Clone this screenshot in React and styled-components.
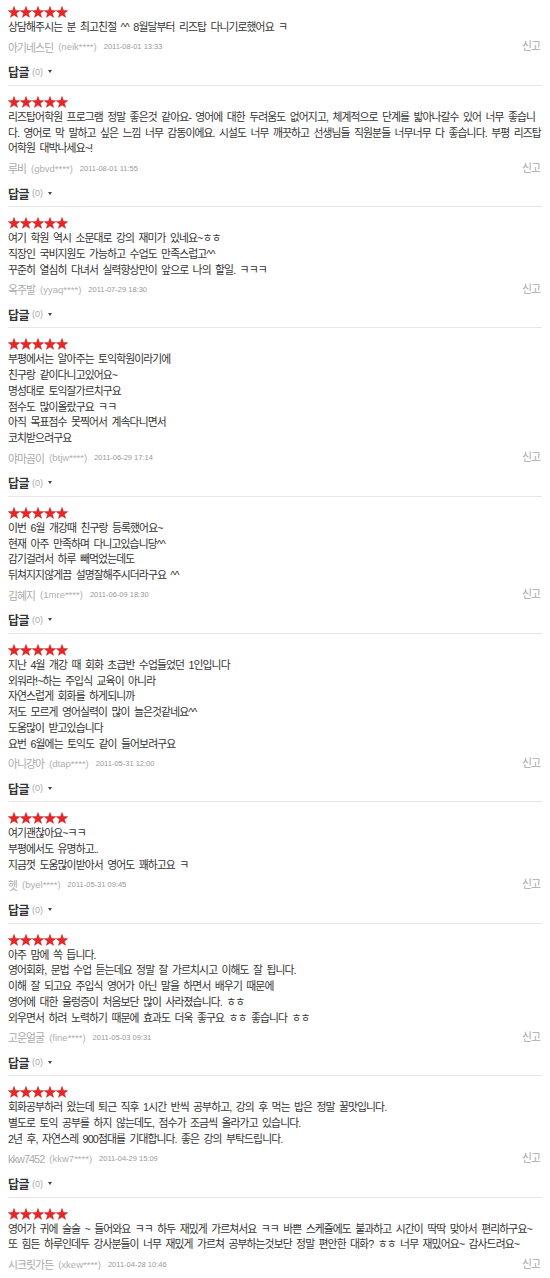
import React from 'react'
import styled, { createGlobalStyle } from 'styled-components'

const reviews = [
  {
    name: '아기네스딘', id: 'neik****', date: '2011-08-01 13:33',
    lines: ['상담해주시는 분 최고친절 ^^ 8월달부터 리즈탑 다니기로했어요 ㅋ'],
  },
  {
    name: '루비', id: 'gbvd****', date: '2011-08-01 11:55',
    lines: [
      '리즈탑어학원 프로그램 정말 좋은것 같아요- 영어에 대한 두려움도 없어지고, 체계적으로 단계를 밟아나갈수 있어 너무 좋습니',
      '다. 영어로 막 말하고 싶은 느낌 너무 감동이에요. 시설도 너무 깨끗하고 선생님들 직원분들 너무너무 다 좋습니다. 부평 리즈탑',
      '어학원 대박나세요~!',
    ],
  },
  {
    name: '옥주발', id: 'yyaq****', date: '2011-07-29 18:30',
    lines: [
      '여기 학원 역시 소문대로 강의 재미가 있네요~ㅎㅎ',
      '직장인 국비지원도 가능하고 수업도 만족스럽고^^',
      '꾸준히 열심히 다녀서 실력향상만이 앞으로 나의 할일. ㅋㅋㅋ',
    ],
  },
  {
    name: '야마곰이', id: 'btjw****', date: '2011-06-29 17:14',
    lines: [
      '부평에서는 알아주는 토익학원이라기에',
      '친구랑 같이다니고있어요~',
      '명성대로 토익잘가르치구요',
      '점수도 많이올랐구요 ㅋㅋ',
      '아직 목표점수 못찍어서 계속다니면서',
      '코치받으려구요',
    ],
  },
  {
    name: '김혜지', id: '1mre****', date: '2011-06-09 18:30',
    lines: [
      '이번 6월 개강때 친구랑 등록했어요~',
      '현재 아주 만족하며 다니고있습니당^^',
      '감기걸려서 하루 빼먹었는데도',
      '뒤쳐지지않게끔 설명잘해주시더라구요 ^^',
    ],
  },
  {
    name: '아니걍아', id: 'dtap****', date: '2011-05-31 12:00',
    lines: [
      '지난 4월 개강 때 회화 초급반 수업들었던 1인입니다',
      '외워라!~하는 주입식 교육이 아니라',
      '자연스럽게 회화를 하게되니까',
      '저도 모르게 영어실력이 많이 늘은것같네요^^',
      '도움많이 받고있습니다',
      '요번 6월에는 토익도 같이 들어보려구요',
    ],
  },
  {
    name: '헷', id: 'byel****', date: '2011-05-31 09:45',
    lines: [
      '여기괜찮아요~ㅋㅋ',
      '부평에서도 유명하고..',
      '지금껏 도움많이받아서 영어도 꽤하고요 ㅋ',
    ],
  },
  {
    name: '고운얼굴', id: 'fine****', date: '2011-05-03 09:31',
    lines: [
      '아주 맘에 쏙 듭니다.',
      '영어회화, 문법 수업 듣는데요 정말 잘 가르치시고 이해도 잘 됩니다.',
      '이해 잘 되고요 주입식 영어가 아닌 말을 하면서 배우기 때문에',
      '영어에 대한 울렁증이 처음보단 많이 사라졌습니다. ㅎㅎ',
      '외우면서 하려 노력하기 때문에 효과도 더욱 좋구요 ㅎㅎ 좋습니다 ㅎㅎ',
    ],
  },
  {
    name: 'kkw7452', id: 'kkw7****', date: '2011-04-29 15:09',
    lines: [
      '회화공부하러 왔는데 퇴근 직후 1시간 반씩 공부하고, 강의 후 먹는 밥은 정말 꿀맛입니다.',
      '별도로 토익 공부를 하지 않는데도, 점수가 조금씩 올라가고 있습니다.',
      '2년 후, 자연스레 900점대를 기대합니다. 좋은 강의 부탁드립니다.',
    ],
  },
  {
    name: '시크릿가든', id: 'xkew****', date: '2011-04-28 10:46',
    lines: [
      '영어가 귀에 술술 ~ 들어와요 ㅋㅋ 하두 재밌게 가르쳐서요 ㅋㅋ 바쁜 스케쥴에도 불과하고 시간이 딱딱 맞아서 편리하구요~',
      '또 힘든 하루인데두 강사분들이 너무 재밌게 가르쳐 공부하는것보단 정말 편안한 대화? ㅎㅎ 너무 재밌어요~ 감사드려요~',
    ],
  },
]

const GlobalStyle = createGlobalStyle`
  body {
    margin: 0;
    background: #fff;
    font-family: "Liberation Sans", "Noto Sans CJK KR", sans-serif;
  }
`

const List = styled.div`
  padding: 0 8px;
`

const Item = styled.div`
  padding: 10px 0 5px;
  border-top: 1px solid #e6e6e6;
  &:first-child {
    border-top: none;
    padding-top: 6px;
  }
`

const Stars = styled.div`
  display: flex;
  height: 12px;
`

const Body = styled.div`
  margin-top: 2px;
  font-size: 10.8px;
  color: #333;
  letter-spacing: -0.9px;
  word-spacing: 2.3px;
  white-space: nowrap;
`

const Line = styled.div`
  height: 15.75px;
  line-height: 15.75px;
`

const Meta = styled.div`
  display: flex;
  align-items: center;
  height: 16px;
  margin-top: 3px;
`

const Name = styled.span`
  font-size: 10.8px;
  letter-spacing: -0.9px;
  color: #aaa;
`

const UserId = styled.span`
  margin-left: 5px;
  font-size: 9.5px;
  color: #b0b0b0;
`

const Date = styled.span`
  margin-left: 7px;
  font-size: 7.5px;
  color: #999;
`

const Report = styled.span`
  margin-left: auto;
  margin-right: 2px;
  margin-top: -3px;
  font-size: 10.8px;
  letter-spacing: -0.9px;
  color: #aaa;
`

const ReplyRow = styled.div`
  display: flex;
  align-items: center;
  height: 16px;
  margin-top: 9px;
`

const ReplyLabel = styled.span`
  font-size: 12px;
  font-weight: bold;
  letter-spacing: -0.6px;
  color: #333;
`

const ReplyCount = styled.span`
  margin-left: 3px;
  font-size: 9px;
  color: #aaa;
`

const Caret = styled.span`
  margin-left: 5px;
  width: 0;
  height: 0;
  border-left: 2.5px solid transparent;
  border-right: 2.5px solid transparent;
  border-top: 3px solid #444;
`

const Star = () => (
  <svg width="12" height="12" viewBox="0 0 12 12">
    <path
      d="M6 0.5 L7.47 4.48 L11.71 4.65 L8.38 7.27 L9.53 11.35 L6 9 L2.47 11.35 L3.62 7.27 L0.29 4.65 L4.53 4.48 Z"
      fill="#e92626"
      stroke="#c41a1a"
      strokeWidth="0.5"
      strokeLinejoin="round"
    />
  </svg>
)

const Review = ({ name, id, date, lines }) => (
  <Item>
    <Stars>
      {[0, 1, 2, 3, 4].map(i => <Star key={i} />)}
    </Stars>
    <Body>
      {lines.map((l, i) => <Line key={i}>{l}</Line>)}
    </Body>
    <Meta>
      <Name>{name}</Name>
      <UserId>({id})</UserId>
      <Date>{date}</Date>
      <Report>신고</Report>
    </Meta>
    <ReplyRow>
      <ReplyLabel>답글</ReplyLabel>
      <ReplyCount>(0)</ReplyCount>
      <Caret />
    </ReplyRow>
  </Item>
)

export default function App() {
  return (
    <>
      <GlobalStyle />
      <List>
        {reviews.map(r => <Review key={r.date + r.id} {...r} />)}
      </List>
    </>
  )
}
